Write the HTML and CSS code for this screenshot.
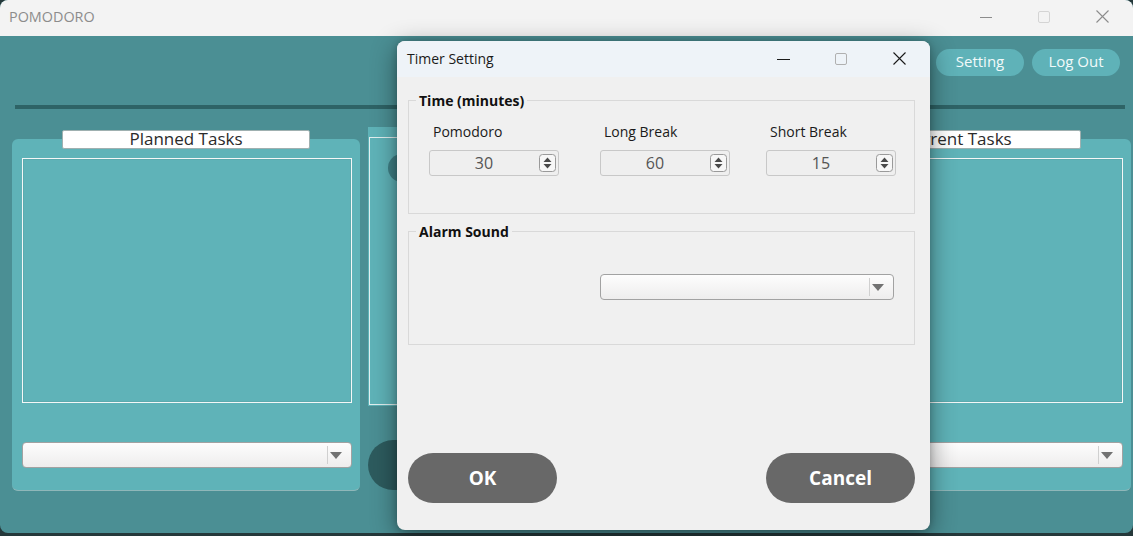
FILE: index.html
```html
<!DOCTYPE html>
<html lang="en">
<head>
<meta charset="utf-8">
<title>POMODORO</title>
<link rel="stylesheet" href="styles.css">
</head>
<body>
<div class="window">
  <header class="titlebar">
    <span class="app-title">POMODORO</span>
    <div class="caption">
      <span class="cap-btn"><svg width="12" height="12" viewBox="0 0 12 12"><path d="M0 6.5H12" stroke="#8c8c8c" stroke-width="1"/></svg></span>
      <span class="cap-btn"><svg width="12" height="12" viewBox="0 0 12 12"><rect x="0.5" y="0.5" width="11" height="11" rx="1.5" fill="none" stroke="#d4d4d4"/></svg></span>
      <span class="cap-btn"><svg width="13" height="13" viewBox="0 0 13 13"><path d="M0.5 0.5L12.5 12.5M12.5 0.5L0.5 12.5" stroke="#8c8c8c" stroke-width="1.1"/></svg></span>
    </div>
  </header>
  <main class="content">
    <div class="topbar">
      <button class="pill-btn">Setting</button>
      <button class="pill-btn">Log Out</button>
    </div>
    <div class="separator"></div>
    <div class="panels">
      <section class="task-panel">
        <div class="panel-title">Planned Tasks</div>
        <div class="task-list"></div>
        <div class="combo combo-main"><span class="combo-sep"></span><span class="combo-arrow"></span></div>
      </section>
      <div class="center-col">
        <div class="timer-panel">
          <div class="timer-frame"><div class="timer-chip"></div></div>
        </div>
        <div class="action-row">
          <div class="action-pill"></div>
          <div class="action-pill"></div>
        </div>
      </div>
      <section class="task-panel">
        <div class="panel-title">Current Tasks</div>
        <div class="task-list"></div>
        <div class="combo combo-main"><span class="combo-sep"></span><span class="combo-arrow"></span></div>
      </section>
    </div>
  </main>
</div>

<div class="dialog">
  <div class="dlg-titlebar">
    <span class="dlg-title">Timer Setting</span>
    <div class="caption">
      <span class="cap-btn"><svg width="13" height="12" viewBox="0 0 13 12"><path d="M0 6.5H13" stroke="#1a1a1a" stroke-width="1"/></svg></span>
      <span class="cap-btn"><svg width="12" height="12" viewBox="0 0 12 12"><rect x="0.5" y="0.5" width="11" height="11" rx="1.5" fill="none" stroke="#b0b0b0"/></svg></span>
      <span class="cap-btn"><svg width="13" height="13" viewBox="0 0 13 13"><path d="M0.5 0.5L12.5 12.5M12.5 0.5L0.5 12.5" stroke="#1a1a1a" stroke-width="1.1"/></svg></span>
    </div>
  </div>
  <div class="dlg-body">
    <fieldset class="group">
      <legend>Time (minutes)</legend>
      <div class="time-grid">
        <div class="field">
          <label class="field-label">Pomodoro</label>
          <div class="spin"><span class="spin-val">30</span><span class="spin-btn"><svg width="17" height="18" viewBox="0 0 17 18"><rect x="0.5" y="0.5" width="16" height="17" rx="3" fill="#f7f7f7" stroke="#9a9a9a"/><path d="M4.5 8L8.5 3.5L12.5 8Z M4.5 10L8.5 14.5L12.5 10Z" fill="#4a4a4a"/></svg></span></div>
        </div>
        <div class="field">
          <label class="field-label">Long Break</label>
          <div class="spin"><span class="spin-val">60</span><span class="spin-btn"><svg width="17" height="18" viewBox="0 0 17 18"><rect x="0.5" y="0.5" width="16" height="17" rx="3" fill="#f7f7f7" stroke="#9a9a9a"/><path d="M4.5 8L8.5 3.5L12.5 8Z M4.5 10L8.5 14.5L12.5 10Z" fill="#4a4a4a"/></svg></span></div>
        </div>
        <div class="field">
          <label class="field-label">Short Break</label>
          <div class="spin"><span class="spin-val">15</span><span class="spin-btn"><svg width="17" height="18" viewBox="0 0 17 18"><rect x="0.5" y="0.5" width="16" height="17" rx="3" fill="#f7f7f7" stroke="#9a9a9a"/><path d="M4.5 8L8.5 3.5L12.5 8Z M4.5 10L8.5 14.5L12.5 10Z" fill="#4a4a4a"/></svg></span></div>
        </div>
      </div>
    </fieldset>
    <fieldset class="group group-alarm">
      <legend>Alarm Sound</legend>
      <div class="alarm-body">
        <div class="combo combo-dlg"><span class="combo-sep"></span><span class="combo-arrow"></span></div>
      </div>
    </fieldset>
    <div class="dlg-actions">
      <button class="dlg-btn">OK</button>
      <button class="dlg-btn">Cancel</button>
    </div>
  </div>
</div>
</body>
</html>
```

FILE: styles.css
```css
* { box-sizing: border-box; }

html, body {
  margin: 0;
  padding: 0;
}

body {
  width: 1133px;
  height: 536px;
  overflow: hidden;
  background: #25383a;
  font-family: "Open Sans", "Noto Sans", sans-serif;
  position: relative;
}

.window {
  width: 1133px;
  height: 533px;
  border-radius: 8px;
  overflow: hidden;
  display: flex;
  flex-direction: column;
  background: #4b8f94;
}

.titlebar {
  height: 36px;
  flex: 0 0 36px;
  background: #f3f3f3;
  display: flex;
  align-items: center;
  padding: 0 0 3px 9px;
}

.app-title {
  font-size: 14.4px;
  color: #8c8c8c;
  letter-spacing: 0;
}

.caption {
  margin-left: auto;
  display: flex;
  height: 100%;
}

.cap-btn {
  width: 58px;
  height: 100%;
  display: flex;
  align-items: center;
  justify-content: center;
}

.titlebar .caption {
  margin-right: 2px;
}

.content {
  flex: 1;
  display: flex;
  flex-direction: column;
}

.topbar {
  display: flex;
  justify-content: flex-end;
  gap: 8px;
  padding: 13px 13px 0 0;
}

.pill-btn {
  width: 88px;
  height: 27px;
  border: none;
  border-radius: 14px;
  background: #5fb2b8;
  color: #f2fafa;
  font-family: "Open Sans", "Noto Sans", sans-serif;
  font-size: 15px;
  line-height: 25px;
  padding: 0 0 2px;
}

.separator {
  height: 4px;
  margin: 29px 8px 0 15px;
  background: #2e6366;
}

.panels {
  display: flex;
  gap: 8px;
  margin-top: 18px;
  padding-left: 12px;
  align-items: flex-start;
}

.task-panel {
  position: relative;
  width: 348px;
  height: 352px;
  margin-top: 12px;
  background: #5fb3b8;
  border-radius: 6px;
  border-bottom: 1px solid #8fb7b9;
  padding: 19px 8px 0 10px;
  display: flex;
  flex-direction: column;
}

.panel-title {
  position: absolute;
  top: -9px;
  left: 50px;
  right: 50px;
  height: 19px;
  background: #ffffff;
  border: 1px solid #9fb0b0;
  border-radius: 2px;
  text-align: center;
  font-family: "Open Sans", "Noto Sans", sans-serif;
  font-size: 17px;
  line-height: 15px;
  color: #2a2a2a;
}

.task-list {
  height: 245px;
  border: 1px solid #f4f7f7;
  box-shadow: inset 0 0 0 1px rgba(80, 120, 120, 0.15);
}

.combo {
  position: relative;
  height: 26px;
  border: 1px solid #a2a2a2;
  border-radius: 4px;
  background: linear-gradient(#fdfdfd, #eeeded);
}

.combo-main {
  margin-top: 39px;
}

.combo-sep {
  position: absolute;
  right: 23px;
  top: 3px;
  bottom: 3px;
  width: 1px;
  background: #d0d0d0;
}

.combo-arrow {
  position: absolute;
  right: 9px;
  top: 9px;
  width: 0;
  height: 0;
  border-left: 6px solid transparent;
  border-right: 6px solid transparent;
  border-top: 7px solid #727272;
}

.center-col {
  width: 407px;
  display: flex;
  flex-direction: column;
}

.timer-panel {
  height: 279px;
  background: #5fb3b8;
  padding: 10px 0 1px 1px;
}

.timer-frame {
  height: 268px;
  border: 1px solid #e2f0f0;
  padding: 16px 0 0 18px;
}

.timer-chip {
  width: 120px;
  height: 28px;
  border-radius: 14px;
  background: #3f8086;
}

.action-row {
  display: flex;
  justify-content: space-between;
  margin-top: 34px;
}

.action-pill {
  width: 150px;
  height: 50px;
  border-radius: 25px;
  background: #2d5b5e;
}

/* Dialog window */
.dialog {
  position: absolute;
  left: 397px;
  top: 41px;
  width: 533px;
  height: 489px;
  border-radius: 8px;
  overflow: hidden;
  background: #f0f0f0;
  box-shadow: 0 6px 26px rgba(0, 0, 0, 0.45), 0 0 6px rgba(0, 0, 0, 0.2);
  display: flex;
  flex-direction: column;
  color: #1a1a1a;
}

.dlg-titlebar {
  height: 36px;
  flex: 0 0 36px;
  background: #eef3f8;
  display: flex;
  align-items: center;
  padding: 0 0 1px 10px;
}

.dlg-titlebar .caption {
  margin-right: 2px;
}

.dlg-title {
  font-size: 14px;
  color: #1a1a1a;
}

.dlg-body {
  flex: 1;
  display: flex;
  flex-direction: column;
  padding: 14px 15px 27px 11px;
}

.group {
  margin: 0;
  padding: 0;
  border: 1px solid #d9d9d9;
  min-width: 0;
}

.group legend {
  margin-left: 7px;
  padding: 0 3px;
  font-size: 14px;
  font-weight: 700;
  line-height: 19px;
  color: #111;
}

.time-grid {
  display: grid;
  grid-template-columns: 171px 166px 129px;
  padding: 12px 0 37px 20px;
}

.field {
  display: flex;
  flex-direction: column;
  gap: 8px;
}

.field-label {
  font-size: 14px;
  line-height: 20px;
  padding-left: 4px;
  color: #1a1a1a;
}

.spin {
  width: 130px;
  height: 26px;
  border: 1px solid #c8c8c8;
  border-radius: 3px;
  background: #efefef;
  display: flex;
  align-items: center;
}

.spin-val {
  width: 108px;
  text-align: center;
  font-size: 16px;
  color: #555555;
  line-height: 24px;
}

.spin-btn {
  display: flex;
  margin-left: 1px;
}

.group-alarm {
  margin-top: 8px;
}

.alarm-body {
  padding: 33px 20px 44px 191px;
}

.dlg-actions {
  margin-top: auto;
  display: flex;
  justify-content: space-between;
}

.dlg-btn {
  width: 149px;
  height: 50px;
  border: none;
  border-radius: 25px;
  background: #686868;
  color: #ffffff;
  font-family: "Open Sans", "Noto Sans", sans-serif;
  font-size: 19px;
  font-weight: 700;
  padding: 0;
}
```
